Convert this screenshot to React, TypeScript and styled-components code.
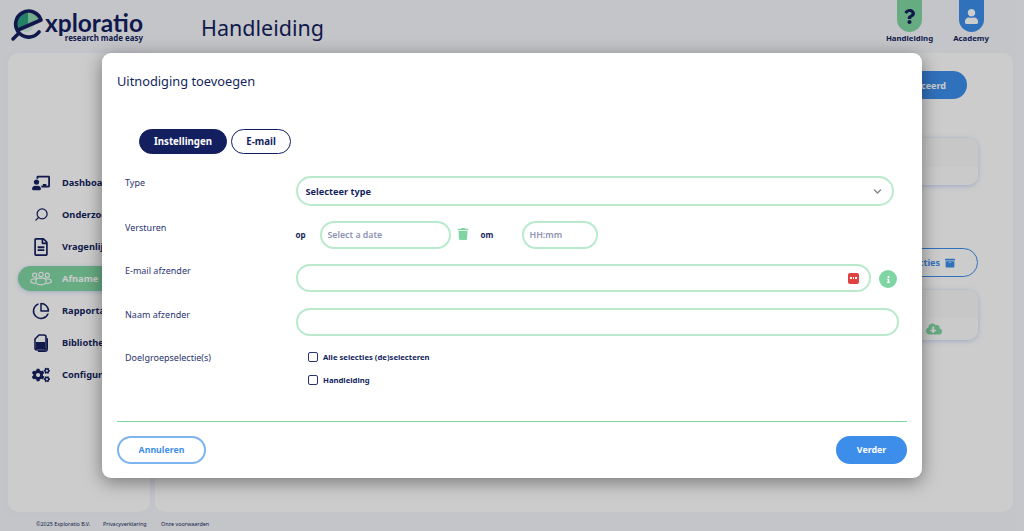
import React from "react";
import styled, { createGlobalStyle } from "styled-components";
import {
  FaArchive,
  FaChalkboardTeacher,
  FaChevronDown,
  FaCloudDownloadAlt,
  FaCogs,
  FaInfo,
  FaQuestion,
  FaRegFileAlt,
  FaTrash,
  FaUser,
} from "react-icons/fa";
import { FiPieChart } from "react-icons/fi";
import { LuSearch } from "react-icons/lu";

const navy = "#141f60";
const green = "#80d6a3";
const lightGreen = "#b9eacd";
const blue = "#3d8eeb";
const lightBlue = "#7db4f2";

const GlobalStyle = createGlobalStyle`
  html, body {
    margin: 0;
    height: 100%;
    overflow: hidden;
    font-family: "Noto Sans", "Open Sans", sans-serif;
    color: ${navy};
  }
`;

const Page = styled.div`
  position: relative;
  height: 100vh;
  display: flex;
  flex-direction: column;
  background: #f5f7fb;
`;

const Header = styled.header`
  height: 53px;
  flex: none;
  display: flex;
  padding-left: 10px;
`;

const Logo = styled.div`
  width: 134px;
  height: 44px;
  margin-top: 9px;
  display: flex;
`;

const LogoWords = styled.div`
  display: flex;
  flex-direction: column;
  align-items: flex-end;
  margin-left: -1px;
`;

const LogoName = styled.span`
  font-family: "Lato", sans-serif;
  font-size: 24.5px;
  font-weight: 700;
  line-height: 22px;
  margin-top: 3px;
`;

const LogoTag = styled.span`
  font-size: 7.9px;
  font-weight: 700;
  line-height: 9px;
`;

const PageTitle = styled.h1`
  margin: 13px 0 0 57px;
  font-size: 21.5px;
  font-weight: 400;
  line-height: 30px;
`;

const QuickLinks = styled.div`
  margin-left: auto;
  display: flex;
  margin-right: 28px;
  gap: 11.5px;
`;

const QuickLink = styled.div`
  display: flex;
  flex-direction: column;
  align-items: center;
  width: 50px;
  font-size: 7.8px;
  font-weight: 700;
`;

const QuickIcon = styled.div<{ $bg: string }>`
  width: 25px;
  height: 32px;
  border-radius: 0 0 13px 13px;
  background: ${(p) => p.$bg};
  display: flex;
  align-items: center;
  justify-content: center;
  color: ${(p) => (p.$bg === green ? navy : "#fff")};
  margin-bottom: 1px;
`;

const Content = styled.div`
  flex: 1;
  display: flex;
  gap: 5px;
  padding: 0 11px 0 8px;
  min-height: 0;
`;

const Sidebar = styled.nav`
  width: 142px;
  background: #fff;
  border-radius: 10px;
  padding: 117px 0 0 10px;
  box-sizing: border-box;
  display: flex;
  flex-direction: column;
  gap: 7px;
  box-shadow: 0 0 6px rgba(120, 140, 200, 0.08);
`;

const NavItem = styled.div<{ $active?: boolean }>`
  height: 25px;
  flex: none;
  display: flex;
  align-items: center;
  padding-left: 12px;
  border-radius: 13px 0 0 13px;
  font-size: 9.3px;
  font-weight: 700;
  background: ${(p) => (p.$active ? green : "transparent")};
  color: ${(p) => (p.$active ? "#fff" : navy)};
  box-shadow: ${(p) => (p.$active ? "0 1px 4px rgba(60,110,220,0.3)" : "none")};
`;

const NavIcon = styled.span`
  width: 22px;
  margin-right: 10px;
  display: flex;
  justify-content: center;
  font-size: 18px;
`;

const Main = styled.main`
  flex: 1;
  background: #fff;
  border-radius: 10px;
  padding: 18px 35px 0 0;
  display: flex;
  flex-direction: column;
  align-items: flex-end;
`;

const PrimaryPill = styled.div`
  width: 200px;
  height: 28px;
  margin-right: 11px;
  border-radius: 14px;
  background: ${blue};
  color: #fff;
  font-size: 9px;
  font-weight: 700;
  display: flex;
  align-items: center;
  justify-content: flex-end;
  padding-right: 21px;
  box-sizing: border-box;
`;

const Card = styled.div<{ $height: number; $top: number; $head: number }>`
  width: 500px;
  height: ${(p) => p.$height}px;
  margin-top: ${(p) => p.$top}px;
  border-radius: 10px;
  overflow: hidden;
  background: linear-gradient(#f9f9f9 ${(p) => p.$head}px, #fdfdfd ${(p) => p.$head}px);
  box-shadow: 0 1px 5px rgba(80, 130, 230, 0.35);
  display: flex;
  align-items: flex-end;
  justify-content: flex-end;
`;

const CardAction = styled.span`
  color: ${green};
  font-size: 16px;
  line-height: 16px;
  margin: 0 36px 1px 0;
`;

const OutlinePill = styled.div`
  width: 250px;
  height: 29px;
  box-sizing: border-box;
  margin-top: 63px;
  border: 1px solid ${blue};
  border-radius: 15px;
  color: ${blue};
  font-size: 9px;
  font-weight: 700;
  display: flex;
  align-items: center;
  justify-content: flex-end;
  gap: 5px;
  padding-right: 22px;
`;

const Footer = styled.footer`
  height: 19px;
  flex: none;
  display: flex;
  align-items: center;
  padding: 5px 0 0 36px;
  box-sizing: border-box;
  font-size: 5.4px;
`;

const FooterText = styled.span<{ $width: number }>`
  width: ${(p) => p.$width}px;
`;

const Overlay = styled.div`
  position: absolute;
  inset: 0;
  background: rgba(0, 0, 0, 0.2);
  display: flex;
  justify-content: center;
  padding-top: 53px;
  box-sizing: border-box;
`;

const Modal = styled.section`
  width: 820px;
  height: 425px;
  background: #fff;
  border-radius: 9px;
  box-shadow: 0 4px 18px rgba(0, 0, 0, 0.42);
  padding: 0 15px;
  box-sizing: border-box;
  display: flex;
  flex-direction: column;
`;

const ModalTitle = styled.h2`
  margin: 18px 0 0;
  font-size: 12.8px;
  font-weight: 400;
  line-height: 20px;
`;

const Tabs = styled.div`
  display: flex;
  gap: 4px;
  margin: 38px 0 0 22px;
`;

const Tab = styled.div<{ $active?: boolean }>`
  height: 25px;
  box-sizing: border-box;
  width: ${(p) => (p.$active ? 88 : 60)}px;
  justify-content: center;
  border-radius: 13px;
  border: 1px solid ${navy};
  background: ${(p) => (p.$active ? navy : "#fff")};
  color: ${(p) => (p.$active ? "#fff" : navy)};
  font-size: 9.7px;
  font-weight: 700;
  display: flex;
  align-items: center;
`;

const Form = styled.div`
  margin: 22px 0 0 8px;
  display: flex;
  flex-direction: column;
`;

const Row = styled.div<{ $height: number }>`
  height: ${(p) => p.$height}px;
  display: flex;
`;

const Label = styled.label`
  width: 170.5px;
  flex: none;
  font-size: 9px;
  line-height: 14px;
  color: #2a3470;
`;

const Field = styled.div<{ $width: number; $tall?: boolean; $bold?: boolean }>`
  width: ${(p) => p.$width}px;
  height: ${(p) => (p.$tall ? 30 : 28)}px;
  flex: none;
  box-sizing: border-box;
  border: 2px solid ${lightGreen};
  border-radius: 15px;
  background: #fff;
  display: flex;
  align-items: center;
  justify-content: space-between;
  padding: 0 10px 0 ${(p) => (p.$bold ? "8px" : "6px")};
  font-size: ${(p) => (p.$bold ? 9.2 : 8.8)}px;
  font-weight: ${(p) => (p.$bold ? 700 : 600)};
  color: ${(p) => (p.$bold ? navy : "#8d93b3")};
`;

const SmallBold = styled.span<{ $width: number }>`
  width: ${(p) => p.$width}px;
  flex: none;
  font-size: 8px;
  font-weight: 700;
  line-height: 28px;
`;

const TrashIcon = styled.span`
  width: 30px;
  height: 26px;
  flex: none;
  color: ${green};
  font-size: 12px;
  display: flex;
  align-items: center;
  padding-left: 6px;
  box-sizing: border-box;
`;

const PasswordBadge = styled.span`
  width: 11px;
  height: 11px;
  border-radius: 2px;
  background: #e04141;
  display: flex;
  align-items: center;
  justify-content: center;
  gap: 1px;
`;

const BadgeDot = styled.i`
  width: 1.5px;
  height: 1.5px;
  background: #fff;
`;

const InfoDot = styled.span`
  width: 18px;
  height: 18px;
  margin: 6px 0 0 8px;
  flex: none;
  border-radius: 50%;
  background: ${green};
  color: #fff;
  font-size: 7px;
  display: flex;
  align-items: center;
  justify-content: center;
`;

const CheckList = styled.div`
  display: flex;
  flex-direction: column;
  gap: 13px;
  padding: 1px 0 0 12.5px;
`;

const CheckRow = styled.div`
  display: flex;
  align-items: center;
  gap: 5px;
  font-size: 7.7px;
  font-weight: 700;
  line-height: 10px;
`;

const CheckBox = styled.span`
  width: 10px;
  height: 10px;
  box-sizing: border-box;
  border: 1.5px solid #2a3470;
  border-radius: 2px;
`;

const ModalFooter = styled.div`
  margin-top: auto;
  border-top: 1px solid ${green};
  height: 57px;
  flex: none;
  display: flex;
  justify-content: space-between;
  align-items: center;
  padding-bottom: 1px;
  box-sizing: border-box;
`;

const FooterButton = styled.div<{ $filled?: boolean }>`
  height: 28px;
  box-sizing: border-box;
  width: ${(p) => (p.$filled ? 71 : 89)}px;
  border-radius: 14px;
  border: 2px solid ${(p) => (p.$filled ? blue : lightBlue)};
  background: ${(p) => (p.$filled ? blue : "#fff")};
  color: ${(p) => (p.$filled ? "#fff" : blue)};
  font-size: 8.8px;
  font-weight: 700;
  display: flex;
  align-items: center;
  justify-content: center;
`;

const ExploratioMark = () => (
  <svg width="36" height="36" viewBox="0 0 36 36">
    <path d="M18 15 L18 4 A11 11 0 0 0 8 20 Z" fill="#2fa183" />
    <path d="M18 15 L18 4 A11 11 0 0 1 29.5 11 Z" fill="#8fd9b0" />
    <path d="M11 21.5 L24 15.5 A8 8 0 0 1 13 22.5 Z" fill="#d5efe2" />
    <path
      d="M8 21 L31 11 A13 13 0 1 0 29 23"
      fill="none"
      stroke={navy}
      strokeWidth="3.6"
      strokeLinecap="round"
      strokeLinejoin="round"
    />
    <path d="M8 25 L3 30" stroke={navy} strokeWidth="3.5" strokeLinecap="round" />
  </svg>
);

const PeopleIcon = () => (
  <svg width="26" height="18" viewBox="0 0 26 18" fill="none" stroke="#fff" strokeWidth="1.3">
    <circle cx="5.5" cy="4.5" r="2.4" />
    <circle cx="13" cy="3.6" r="2.6" />
    <circle cx="20.5" cy="4.5" r="2.4" />
    <path d="M8 9 H3.5 A2.5 2.5 0 0 0 1 11.5 V13 L6 14.5" />
    <path d="M18 9 H22.5 A2.5 2.5 0 0 1 25 11.5 V13 L20 14.5" />
    <path d="M10 8 H16 A3 3 0 0 1 19 11 V14 Q13 18 7 14 V11 A3 3 0 0 1 10 8 Z" />
  </svg>
);

const BookFileIcon = () => (
  <svg width="14" height="18" viewBox="0 0 14 18" fill={navy}>
    <path
      d="M5 1 H10 A2 2 0 0 1 12 3 V14 A2 2 0 0 1 10 16 H3 A2 2 0 0 1 1 14 V5 Z"
      fill="none"
      stroke={navy}
      strokeWidth="1.6"
    />
    <rect x="2" y="8" width="9" height="7" />
    <path d="M12.6 4 H13 A1 1 0 0 1 14 5 V15 A3 3 0 0 1 11 18 H4 V16.6 H11 A1.6 1.6 0 0 0 12.6 15 Z" />
  </svg>
);

const navItems = [
  { label: "Dashboard", icon: <FaChalkboardTeacher /> },
  { label: "Onderzoek", icon: <LuSearch style={{ transform: "scaleX(-1)", fontSize: 15 }} /> },
  { label: "Vragenlijst", icon: <FaRegFileAlt /> },
  { label: "Afname", icon: <PeopleIcon />, active: true },
  { label: "Rapportage", icon: <FiPieChart /> },
  { label: "Bibliotheek", icon: <BookFileIcon /> },
  { label: "Configuratie", icon: <FaCogs /> },
];

export default function App() {
  return (
    <Page>
      <GlobalStyle />
      <Header>
        <Logo>
          <ExploratioMark />
          <LogoWords>
            <LogoName>xploratio</LogoName>
            <LogoTag>research made easy</LogoTag>
          </LogoWords>
        </Logo>
        <PageTitle>Handleiding</PageTitle>
        <QuickLinks>
          <QuickLink>
            <QuickIcon $bg={green}>
              <FaQuestion size={15} />
            </QuickIcon>
            Handleiding
          </QuickLink>
          <QuickLink>
            <QuickIcon $bg={blue}>
              <FaUser size={15} />
            </QuickIcon>
            Academy
          </QuickLink>
        </QuickLinks>
      </Header>
      <Content>
        <Sidebar>
          {navItems.map((item) => (
            <NavItem key={item.label} $active={item.active}>
              <NavIcon>{item.icon}</NavIcon>
              {item.label}
            </NavItem>
          ))}
        </Sidebar>
        <Main>
          <PrimaryPill>Geavanceerd</PrimaryPill>
          <Card $height={47} $top={39} $head={29} />
          <OutlinePill>
            Alle selecties <FaArchive size={10} />
          </OutlinePill>
          <Card $height={50} $top={13} $head={28}>
            <CardAction>
              <FaCloudDownloadAlt />
            </CardAction>
          </Card>
        </Main>
      </Content>
      <Footer>
        <FooterText $width={67}>©2025 Exploratio B.V.</FooterText>
        <FooterText $width={58}>Privacyverklaring</FooterText>
        <FooterText $width={60}>Onze voorwaarden</FooterText>
      </Footer>

      <Overlay>
        <Modal>
          <ModalTitle>Uitnodiging toevoegen</ModalTitle>
          <Tabs>
            <Tab $active>Instellingen</Tab>
            <Tab>E-mail</Tab>
          </Tabs>
          <Form>
            <Row $height={45}>
              <Label>Type</Label>
              <Field $width={598.5} $tall $bold>
                Selecteer type
                <FaChevronDown color="#8a8a8a" size={9} />
              </Field>
            </Row>
            <Row $height={43}>
              <Label>Versturen</Label>
              <SmallBold $width={24}>op</SmallBold>
              <Field $width={131}>Select a date</Field>
              <TrashIcon>
                <FaTrash />
              </TrashIcon>
              <SmallBold $width={41}>om</SmallBold>
              <Field $width={76}>HH:mm</Field>
            </Row>
            <Row $height={44}>
              <Label>E-mail afzender</Label>
              <Field $width={575.5}>
                <span />
                <PasswordBadge>
                  <BadgeDot />
                  <BadgeDot />
                  <BadgeDot />
                </PasswordBadge>
              </Field>
              <InfoDot>
                <FaInfo />
              </InfoDot>
            </Row>
            <Row $height={43}>
              <Label>Naam afzender</Label>
              <Field $width={603.5} />
            </Row>
            <Row $height={50}>
              <Label>Doelgroepselectie(s)</Label>
              <CheckList>
                <CheckRow>
                  <CheckBox />
                  Alle selecties (de)selecteren
                </CheckRow>
                <CheckRow>
                  <CheckBox />
                  Handleiding
                </CheckRow>
              </CheckList>
            </Row>
          </Form>
          <ModalFooter>
            <FooterButton>Annuleren</FooterButton>
            <FooterButton $filled>Verder</FooterButton>
          </ModalFooter>
        </Modal>
      </Overlay>
    </Page>
  );
}
